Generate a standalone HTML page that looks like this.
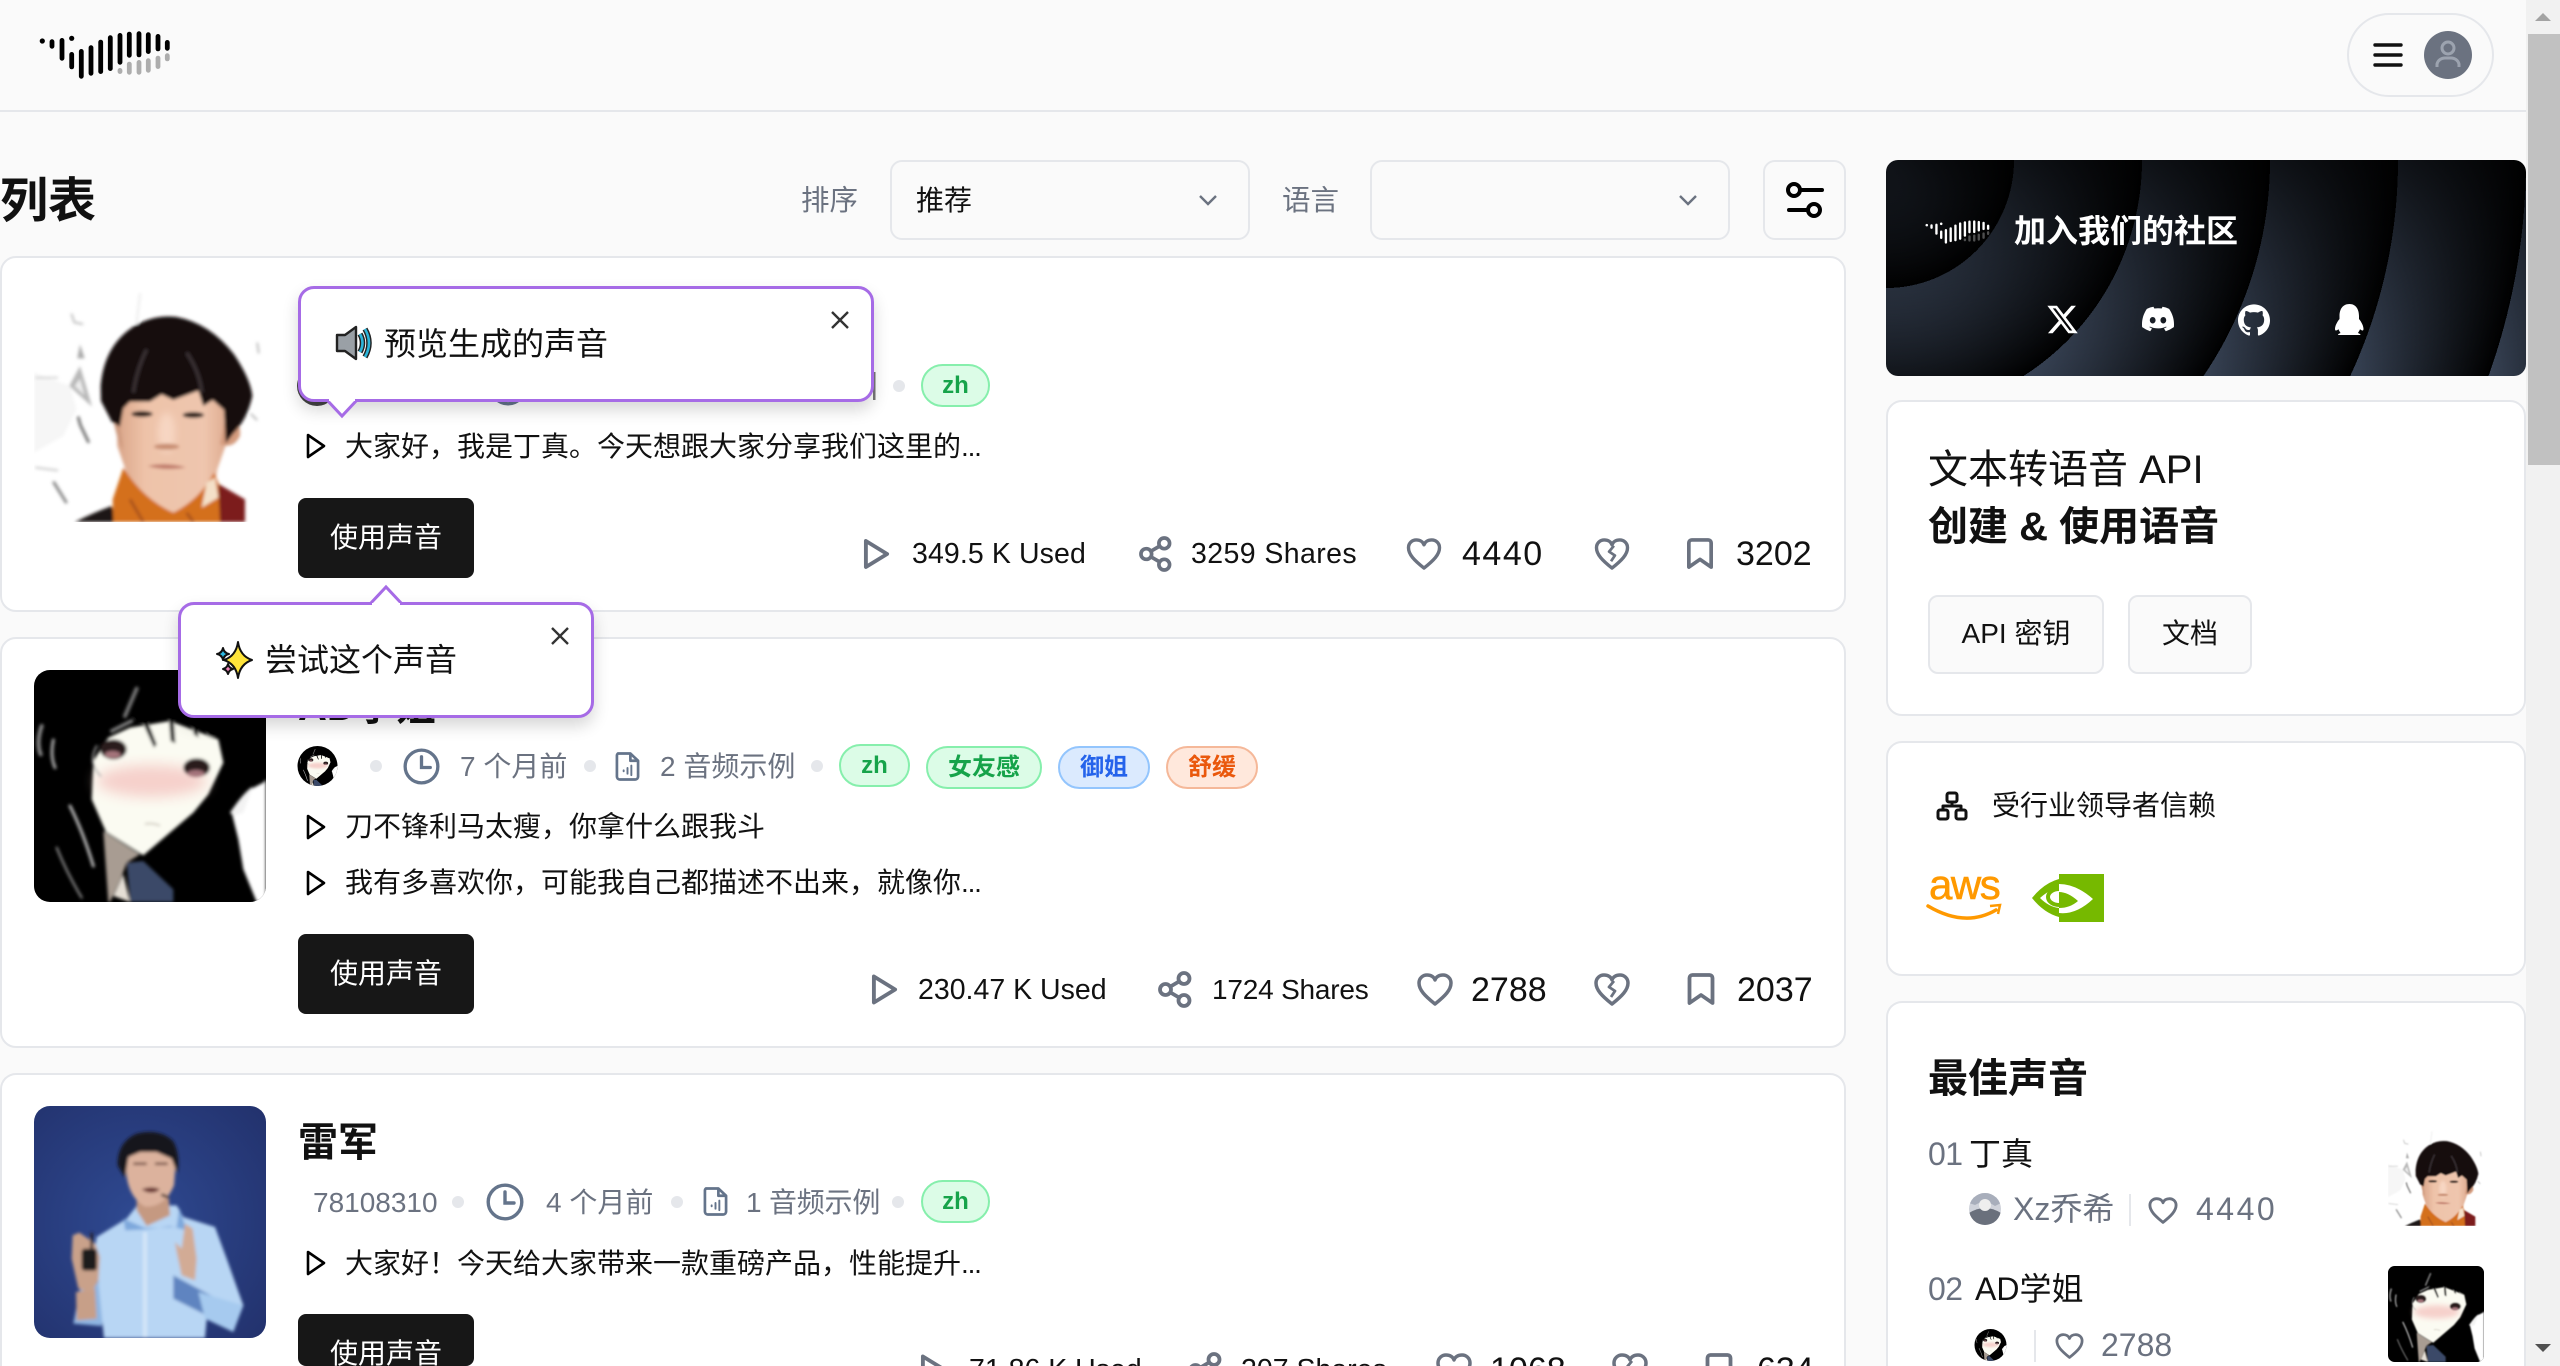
<!DOCTYPE html>
<html lang="zh"><head><meta charset="utf-8"><title>列表</title>
<style>
html,body{margin:0;padding:0;width:2560px;height:1366px;overflow:hidden;background:#fafafa}
body{font-family:"Liberation Sans","Noto Sans CJK SC",sans-serif;color:#111}
#wrap{position:absolute;left:0;top:0;width:2560px;height:1366px;overflow:hidden}
.t{position:absolute;white-space:nowrap;line-height:60px;font-size:28px;margin-top:1px}
.e{letter-spacing:-1.200px}
.c{height:26px;overflow:hidden}
.g{color:#6b7280}.b{font-weight:700}
.box{position:absolute;box-sizing:border-box;border:2px solid #e5e7eb;border-radius:16px;background:#fff}
.open{border-bottom:0;border-bottom-left-radius:0;border-bottom-right-radius:0}
.sel{background:#fafafa;border-radius:12px;height:80px;top:160px}
.btn{position:absolute;left:298px;width:176px;height:80px;background:#171717;color:#fff;border-radius:8px;text-align:center;line-height:80px;font-size:28px;overflow:hidden}
.btn2{position:absolute;box-sizing:border-box;border:2px solid #e5e7eb;border-radius:10px;background:#fafafa;text-align:center;font-size:28px;line-height:74px;top:595px;height:79px}
.dot{position:absolute;width:12px;height:12px;border-radius:50%;background:#e5e7eb}
.tag{position:absolute;box-sizing:border-box;height:43px;border-radius:22px;border:2px solid;text-align:center;font-size:24px;font-weight:700;line-height:40px}
.gr{background:#dcfce7;border-color:#86efac;color:#16a34a}
.bl{background:#dbeafe;border-color:#93c5fd;color:#2563eb}
.or{background:#ffe8dc;border-color:#f5b899;color:#ea580c}
.tip{position:absolute;box-sizing:border-box;border:3px solid #a66be6;border-radius:16px;background:#fff;box-shadow:0 8px 16px rgba(0,0,0,.16)}
#layer{position:absolute;left:0;top:0}
#banner{position:absolute;left:1886px;top:160px;width:640px;height:216px;border-radius:12px;overflow:hidden;background:linear-gradient(rgba(0,0,0,.72),rgba(0,0,0,0) 100%),repeating-radial-gradient(circle at 0 0,#374254 0,#000 128px)}
</style></head><body><div id="wrap">

<div style="position:absolute;left:0;top:110px;width:2526px;height:2px;background:#e5e7eb"></div>
<div class="box" style="left:2347px;top:13px;width:147px;height:84px;border-radius:42px;background:#fafafa"></div>

<div class="t b" style="left:0;top:171px;font-size:48px">列表</div>
<div class="t g" style="left:801px;top:170px;font-size:28.500px">排序</div>
<div class="box sel" style="left:890px;width:360px"></div>
<div class="t" style="left:916px;top:170px">推荐</div>
<div class="t g" style="left:1282px;top:170px;font-size:28.500px">语言</div>
<div class="box sel" style="left:1370px;width:360px"></div>
<div class="box sel" style="left:1763px;width:83px"></div>

<div class="box" style="left:0;top:256px;width:1846px;height:356px"></div>
<div class="box" style="left:0;top:637px;width:1846px;height:411px"></div>
<div class="box open" style="left:0;top:1073px;width:1846px;height:293px"></div>

<div id="banner"></div>
<div class="box" style="left:1886px;top:400px;width:640px;height:316px"></div>
<div class="box" style="left:1886px;top:741px;width:640px;height:235px"></div>
<div class="box open" style="left:1886px;top:1001px;width:640px;height:365px"></div>

<svg id="layer" width="2560" height="1366" viewBox="0 0 2560 1366" xmlns="http://www.w3.org/2000/svg">
<defs>
<filter id="bl" x="-5%" y="-5%" width="110%" height="110%"><feGaussianBlur stdDeviation="5"/></filter>
<filter id="bl2" x="-30%" y="-30%" width="160%" height="160%"><feGaussianBlur stdDeviation="20"/></filter>
<filter id="bl3" x="-30%" y="-30%" width="160%" height="160%"><feGaussianBlur stdDeviation="10"/></filter>
<clipPath id="rc"><rect x="12" y="12" width="696" height="696" rx="48"/></clipPath>
<clipPath id="ca"><circle cx="317.500" cy="766" r="20"/></clipPath>
<clipPath id="cb"><circle cx="1990.500" cy="1345" r="16"/></clipPath>
<clipPath id="cc"><circle cx="1985" cy="1209" r="16"/></clipPath>
<radialGradient id="leib" cx=".45" cy=".5" r=".75"><stop offset="0" stop-color="#2f4a92"/><stop offset="1" stop-color="#22316c"/></radialGradient>
<linearGradient id="skin1" x1="0" y1="0" x2="1" y2="0"><stop offset="0" stop-color="#d9a488"/><stop offset=".25" stop-color="#eec3a9"/><stop offset=".75" stop-color="#efc6ae"/><stop offset="1" stop-color="#d9a488"/></linearGradient>

<symbol id="logo" viewBox="0 0 220 110">
<g fill="currentColor">
<circle cx="42.300" cy="41" r="2.600"/><circle cx="71.700" cy="38.300" r="2.600"/>
<rect x="49.600" y="39.300" width="4.800" height="9.400" rx="2.400"/>
<rect x="59.600" y="38" width="4.800" height="22.700" rx="2.400"/>
<rect x="69.300" y="52" width="4.800" height="17.300" rx="2.400"/>
<rect x="78.900" y="49" width="4.800" height="29.700" rx="2.400"/>
<rect x="88.600" y="45.300" width="4.800" height="30.400" rx="2.400"/>
<rect x="98.300" y="39.700" width="4.800" height="34.300" rx="2.400"/>
<rect x="107.900" y="35.300" width="4.800" height="35.700" rx="2.400"/>
<rect x="117.600" y="33" width="4.800" height="31.700" rx="2.400"/>
<rect x="126.900" y="31.700" width="4.800" height="26" rx="2.400"/>
<rect x="136.600" y="31.300" width="4.800" height="26" rx="2.400"/>
<rect x="145.900" y="32.300" width="4.800" height="21.700" rx="2.400"/>
<rect x="155.600" y="34" width="4.800" height="17.300" rx="2.400"/>
<rect x="164.900" y="40" width="4.800" height="10.700" rx="2.400"/>
</g>
<g fill="currentColor" opacity=".3">
<rect x="117.600" y="68" width="4.800" height="6" rx="2.400"/>
<rect x="126.900" y="61.700" width="4.800" height="13" rx="2.400"/>
<rect x="136.600" y="60" width="4.800" height="14.700" rx="2.400"/>
<rect x="145.900" y="58.300" width="4.800" height="14.400" rx="2.400"/>
<rect x="155.600" y="55.700" width="4.800" height="13.300" rx="2.400"/>
<rect x="164.900" y="53.300" width="4.800" height="8" rx="2.400"/>
</g>
</symbol>

<symbol id="p1" viewBox="12 12 696 696"><g clip-path="url(#rc)">
<rect x="12" y="12" width="696" height="696" fill="#fff"/>
<g filter="url(#bl)">
<path d="M12 260L120 300 140 370 100 450 12 500Z" fill="#f6f6f6"/>
<path d="M150 240L118 300 186 362 168 300Z" fill="#b8b8b8"/>
<path d="M150 278L134 300 164 328Z" fill="#eee"/>
<path d="M150 175l14 42-22 0z" fill="#aaa"/>
<g fill="none" stroke-linecap="round">
<path d="M125 85l8 24 24 5" stroke="#c0c0c0" stroke-width="6"/>
<path d="M18 275h64" stroke="#ccc" stroke-width="5"/>
<path d="M145 395l6 22 24 50" stroke="#777" stroke-width="9"/>
<path d="M72 590l36 58" stroke="#888" stroke-width="9"/>
<path d="M18 545l64 8" stroke="#ccc" stroke-width="6"/>
<path d="M682 172l4 28M664 385l16 16" stroke="#bbb" stroke-width="6"/>
<path d="M330 25l-10 85" stroke="#f0f0f0" stroke-width="8"/>
</g>
<path d="M135 708Q190 680 245 660L262 708Z" fill="#1a1412"/>
<path d="M550 585L645 640V708H540Z" fill="#7c1c1c"/>
<path d="M258 300H610L590 470 562 550 550 640 450 690H380L300 590 262 480Z" fill="url(#skin1)"/>
<path d="M585 400Q635 395 630 450 610 490 570 475Z" fill="#d49b7e"/>
<path d="M250 400Q262 470 280 490L268 400Z" fill="#cf9b80"/>
<ellipse cx="410" cy="440" rx="26" ry="60" fill="#f7d6c2" filter="url(#bl3)"/>
<ellipse cx="410" cy="482" rx="38" ry="9" fill="#c98f73"/>
<path d="M280 545L248 640 250 708H570L565 590 552 560Q510 640 430 680 340 640 280 545Z" fill="#d46f1e"/>
<path d="M530 590l25-15 10 60-50 30z" fill="#f4e0c8"/>
<path d="M300 640l40 68M470 680l20 28" stroke="#a5501a" stroke-width="8" fill="none"/>
<path d="M212 300Q222 180 310 122 370 85 440 93 540 112 612 205 662 280 667 330 652 400 610 442L587 472 582 372 548 342 520 360 505 314 430 342 395 325 360 347 300 347 280 367 270 422 245 407 213 345Z" fill="#120d0f"/>
<path d="M470 200Q510 260 515 320M350 190Q320 250 310 320" stroke="#3a3034" stroke-width="10" fill="none"/>
<ellipse cx="336" cy="384" rx="32" ry="9" fill="#2a1a18"/><ellipse cx="490" cy="387" rx="32" ry="9" fill="#2a1a18"/>
<path d="M352 540Q410 528 468 544 410 556 352 540Z" fill="#c07a6a"/>
</g></g></symbol>

<symbol id="p2" viewBox="12 12 696 696"><g clip-path="url(#rc)">
<rect x="12" y="12" width="696" height="696" fill="#000"/>
<g filter="url(#bl)">
<path d="M700 350L708 340V708H680L640 610 625 520 605 440 660 370Z" fill="#fff"/>
<path d="M600 440Q640 380 668 362L640 440 610 450Z" fill="#f3f3f3"/>
<path d="M190 285L235 215 300 185 420 165 565 220 580 290 535 385 490 440 340 568 228 498 185 400Z" fill="#fbfbf2"/>
<ellipse cx="365" cy="345" rx="165" ry="48" fill="#f6d0cb" filter="url(#bl2)"/>
<ellipse cx="250" cy="250" rx="40" ry="30" fill="#2b1c1e"/><ellipse cx="248" cy="266" rx="24" ry="11" fill="#a5757c"/>
<ellipse cx="500" cy="305" rx="40" ry="28" fill="#2b1c1e"/><ellipse cx="498" cy="323" rx="26" ry="11" fill="#a5757c"/>
<path d="M305 150L345 145 380 235 372 245 338 170ZM412 100L428 110 436 232 422 225ZM482 160L498 150 506 215 492 205ZM532 165L553 160 553 218 532 210Z" fill="#000"/>
<path d="M345 474q22-4 45 5" stroke="#c8c2b8" stroke-width="5" fill="none"/>
<path d="M220 495L330 565 290 590 272 640 240 708 235 708Z" fill="#a89c92"/>
<path d="M290 590L340 585 430 670V708H300Z" fill="#3a4968"/>
<path d="M250 690L280 625 300 708Z" fill="#e5dfd5"/>
<g fill="none" stroke-linecap="round">
<path d="M35 180Q18 230 32 265" stroke="#888" stroke-width="12"/>
<path d="M70 222Q60 270 75 305" stroke="#aaa" stroke-width="9"/>
<path d="M285 150L320 68" stroke="#777" stroke-width="12"/>
<path d="M245 195L305 165" stroke="#888" stroke-width="10"/>
<path d="M120 420Q160 500 190 600" stroke="#bbb" stroke-width="9"/>
<path d="M80 545Q110 620 155 695" stroke="#999" stroke-width="6"/>
<path d="M200 240Q172 290 212 330" stroke="#aaa" stroke-width="5"/>
</g>
</g></g></symbol>

<symbol id="p3" viewBox="12 12 696 696"><g clip-path="url(#rc)">
<rect x="12" y="12" width="696" height="696" fill="url(#leib)"/>
<g filter="url(#bl)">
<path d="M130 665L150 560 205 540 225 620 215 672Z" fill="#8fb6e2"/>
<path d="M138 570L195 560 200 650 140 655Z" fill="#c79f88"/>
<path d="M200 405L290 350 320 312 440 310 460 345 555 375 590 470 640 610 610 685 530 650 525 708H222L205 540 190 470Z" fill="#b8d6f4"/>
<path d="M280 350L345 378 440 375 448 318 470 385 420 372 350 382 286 385Z" fill="#7ea8dc"/>
<path d="M320 270L320 325 350 372 420 340 415 270Z" fill="#c59981"/>
<path d="M288 180Q285 280 345 314 405 316 432 250L438 170 400 130 310 140Z" fill="#dcb29d"/>
<path d="M263 190Q262 120 320 95 390 78 430 118 452 160 442 215L425 170 380 150 330 150 295 165 285 228Z" fill="#17151b"/>
<path d="M310 185h40M375 185h38" stroke="#6a4439" stroke-width="7"/>
<path d="M335 262q30-12 55 0 -25 20-55 0Z" fill="#6b3430"/>
<path d="M394 278l22 8" stroke="#3a2a26" stroke-width="8"/>
<path d="M128 400L148 392 196 425 210 465 205 535 185 572 145 560 125 470Z" fill="#c9a18a"/>
<rect x="155" y="440" width="46" height="66" rx="10" fill="#1c1a1e"/>
<rect x="181" y="392" width="8" height="52" fill="#26242a"/>
<path d="M465 365L488 380 500 470 495 535 455 520 440 450 435 420 455 440Z" fill="#d2ab95"/>
<path d="M430 520L560 590 540 645 430 590Z" fill="#5f84c0"/>
<path d="M505 570L640 610 610 690 525 650Z" fill="#a6caef"/>
<path d="M345 390V708" stroke="#d4e6f8" stroke-width="12" fill="none"/>
</g></g></symbol>

<symbol id="sPlay" viewBox="0 0 28 33"><path d="M3 3L25 16.500 3 30Z" fill="none" stroke="#6b7280" stroke-width="4" stroke-linejoin="round"/></symbol>
<symbol id="kPlay" viewBox="0 0 20 26"><path d="M2 2L18 13 2 24Z" fill="none" stroke="#000" stroke-width="2.600" stroke-linejoin="round"/></symbol>
<symbol id="sShare" viewBox="0 0 34 37" fill="none" stroke="#6b7280" stroke-width="3.800"><circle cx="26" cy="7.500" r="5.500"/><circle cx="7.500" cy="18.500" r="5.500"/><circle cx="26" cy="29.500" r="5.500"/><path d="M12.500 15.500L21 10.500M12.500 21.500L21 26.500"/></symbol>
<symbol id="sHeart" viewBox="0 0 36 33" fill="none" stroke="#6b7280" stroke-width="3.500" stroke-linejoin="round"><path d="M18 31C8 23 2 17 2 10 2 5 6 2 10 2 14 2 17 4 18 7 19 4 22 2 26 2 30 2 34 5 34 10 34 17 28 23 18 31Z"/></symbol>
<symbol id="sBroke" viewBox="0 0 36 33" fill="none" stroke="#6b7280" stroke-width="3.500" stroke-linejoin="round"><path d="M18 31C8 23 2 17 2 10 2 5 6 2 10 2 14 2 17 4 18 7 19 4 22 2 26 2 30 2 34 5 34 10 34 17 28 23 18 31Z"/><path d="M20 8L15 14 21 18 17 24" stroke-width="2.800"/></symbol>
<symbol id="sBook" viewBox="0 0 28 33" fill="none" stroke="#6b7280" stroke-width="3.800" stroke-linejoin="round"><path d="M2.500 5a3 3 0 0 1 3-3h17a3 3 0 0 1 3 3V30L14 22 2.500 30Z"/></symbol>
<symbol id="sClock" viewBox="0 0 38 38" fill="none" stroke="#64748b" stroke-width="3.400"><circle cx="19" cy="19" r="16.800"/><path d="M19 9V20H28" stroke-linecap="round"/></symbol>
<symbol id="sFile" viewBox="0 0 26 30" fill="none" stroke="#64748b" stroke-width="2.800" stroke-linejoin="round"><path d="M3 1.500H16L24 9V25.500a3 3 0 0 1-3 3H5a3 3 0 0 1-3-3V4a3 3 0 0 1 1-2.500Z"/><path d="M16 1.500V9H24"/><path d="M9 19v1M13 16.500v6M17 14v10" stroke-width="2" stroke-linecap="round"/></symbol>
<symbol id="cv" viewBox="0 0 20 12"><path d="M2 2L10 10 18 2" fill="none" stroke="#6b7280" stroke-width="2.400"/></symbol>
</defs>

<!-- header -->
<use href="#logo" x="0" y="0" width="220" height="110" color="#000"/>
<g stroke="#111" stroke-width="3.400" stroke-linecap="round"><path d="M2375 45H2401M2375 55H2401M2375 65H2401"/></g>
<circle cx="2448" cy="55" r="24" fill="#6b7280"/>
<g fill="none" stroke="#9ca3af" stroke-width="3"><circle cx="2448" cy="48" r="6"/><path d="M2437 67v-3a8 8 0 0 1 8-6h6a8 8 0 0 1 8 6v3"/></g>

<!-- filter controls -->
<use href="#cv" x="1198" y="194" width="20" height="12"/>
<use href="#cv" x="1678" y="194" width="20" height="12"/>
<g fill="none" stroke="#000" stroke-width="4" stroke-linecap="round"><circle cx="1794" cy="190" r="6"/><path d="M1801 190H1822"/><circle cx="1814" cy="210" r="6"/><path d="M1789 210H1807"/></g>

<!-- photos -->
<use href="#p1" x="34" y="290" width="232" height="232"/>
<use href="#p2" x="34" y="670" width="232" height="232"/>
<use href="#p3" x="34" y="1106" width="232" height="232"/>

<!-- card 1 -->
<circle cx="317" cy="386" r="20" fill="#444"/>
<use href="#sClock" x="489" y="368" width="38" height="38"/>
<rect x="873" y="372" width="2.500" height="28" fill="#777"/>
<use href="#kPlay" x="306" y="433" width="20" height="26"/>
<use href="#sPlay" x="863" y="538" width="27" height="32"/>
<use href="#sShare" x="1139" y="536" width="33" height="36"/>
<use href="#sHeart" x="1406" y="538" width="36" height="32"/>
<use href="#sBroke" x="1594" y="538" width="36" height="32"/>
<use href="#sBook" x="1686" y="538" width="28" height="32"/>

<!-- card 2 -->
<g clip-path="url(#ca)"><use href="#p2" x="297" y="746" width="41" height="41"/></g>
<use href="#sClock" x="403" y="748" width="37" height="37"/>
<use href="#sFile" x="615" y="752" width="25" height="29"/>
<use href="#kPlay" x="306" y="814" width="20" height="26"/>
<use href="#kPlay" x="306" y="870" width="20" height="26"/>
<use href="#sPlay" x="871" y="973" width="27" height="33"/>
<use href="#sShare" x="1158" y="971" width="34" height="37"/>
<use href="#sHeart" x="1417" y="973" width="36" height="33"/>
<use href="#sBroke" x="1594" y="973" width="36" height="33"/>
<use href="#sBook" x="1687" y="973" width="28" height="33"/>

<!-- card 3 -->
<use href="#sClock" x="486" y="1183" width="38" height="38"/>
<use href="#sFile" x="703" y="1187" width="25" height="29"/>
<use href="#kPlay" x="306" y="1250" width="20" height="26"/>
<use href="#sPlay" x="920" y="1353" width="27" height="33"/>
<use href="#sShare" x="1188" y="1352" width="34" height="37"/>
<use href="#sHeart" x="1436" y="1353" width="36" height="33"/>
<use href="#sBroke" x="1612" y="1353" width="36" height="33"/>
<use href="#sBook" x="1705" y="1353" width="28" height="33"/>

<!-- banner content -->
<use href="#logo" x="1906" y="205" width="108" height="54" color="#fff"/>
<g fill="#fff">
<svg x="2047" y="304" width="31" height="31" viewBox="1 2 22 20"><path d="M18.244 2.250h3.308l-7.227 8.260 8.502 11.240H16.170l-5.214-6.817L4.990 21.750H1.680l7.730-8.835L1.254 2.250H8.080l4.713 6.231zm-1.161 17.520h1.833L7.084 4.126H5.117z"/></svg>
<svg x="2142" y="304" width="32" height="30" viewBox="0 2.500 24 19"><path d="M20.317 4.370a19.791 19.791 0 0 0-4.885-1.515.074.074 0 0 0-.079.037c-.21.375-.444.864-.608 1.250a18.270 18.270 0 0 0-5.487 0 12.640 12.640 0 0 0-.617-1.250.077.077 0 0 0-.079-.037A19.736 19.736 0 0 0 3.677 4.370a.07.07 0 0 0-.032.027C.533 9.046-.32 13.580.099 18.057a.082.082 0 0 0 .031.057 19.900 19.900 0 0 0 5.993 3.030.078.078 0 0 0 .084-.028c.462-.63.874-1.295 1.226-1.994a.076.076 0 0 0-.041-.106 13.107 13.107 0 0 1-1.872-.892.077.077 0 0 1-.008-.128 10.200 10.200 0 0 0 .372-.292.074.074 0 0 1 .077-.01c3.928 1.793 8.180 1.793 12.062 0a.074.074 0 0 1 .078.01c.12.098.246.198.373.292a.077.077 0 0 1-.006.127 12.299 12.299 0 0 1-1.873.892.077.077 0 0 0-.041.107c.36.698.772 1.362 1.225 1.993a.076.076 0 0 0 .084.028 19.839 19.839 0 0 0 6.002-3.030.077.077 0 0 0 .032-.054c.5-5.177-.838-9.674-3.549-13.660a.061.061 0 0 0-.031-.03zM8.020 15.330c-1.183 0-2.157-1.085-2.157-2.419 0-1.333.956-2.419 2.157-2.419 1.210 0 2.176 1.096 2.157 2.420 0 1.333-.956 2.418-2.157 2.418zm7.975 0c-1.183 0-2.157-1.085-2.157-2.419 0-1.333.955-2.419 2.157-2.419 1.210 0 2.176 1.096 2.157 2.420 0 1.333-.946 2.418-2.157 2.418z"/></svg>
<svg x="2238" y="304" width="32" height="32" viewBox="0 0 24 24"><path d="M12 .297c-6.630 0-12 5.373-12 12 0 5.303 3.438 9.800 8.205 11.385.6.113.82-.258.82-.577 0-.285-.01-1.040-.015-2.040-3.338.724-4.042-1.610-4.042-1.610C4.422 18.070 3.633 17.700 3.633 17.700c-1.087-.744.084-.729.084-.729 1.205.084 1.838 1.236 1.838 1.236 1.070 1.835 2.809 1.305 3.495.998.108-.776.417-1.305.76-1.605-2.665-.3-5.466-1.332-5.466-5.930 0-1.310.465-2.380 1.235-3.220-.135-.303-.54-1.523.105-3.176 0 0 1.005-.322 3.300 1.230.96-.267 1.980-.399 3-.405 1.020.006 2.040.138 3 .405 2.280-1.552 3.285-1.230 3.285-1.230.645 1.653.24 2.873.12 3.176.765.84 1.230 1.910 1.230 3.220 0 4.610-2.805 5.625-5.475 5.920.42.36.81 1.096.81 2.220 0 1.606-.015 2.896-.015 3.286 0 .315.21.69.825.57C20.565 22.092 24 17.592 24 12.297c0-6.627-5.373-12-12-12"/></svg>
<path d="M2349.500 304c-7 0-10 5.500-10 12v3c-2.500 3-4.500 7-4.500 10 0 2 1.500 2 3.500 .3 .6 1.600 1.500 2.700 2 3.700-1.500 .6-2.500 1.200-2.500 2h22.500c0-.8-1-1.400-2.500-2 .5-1 1.400-2.100 2-3.700 2 1.700 3.500 1.700 3.500-.3 0-3-2-7-4.500-10v-3c0-6.500-3-12-9.500-12z"/>
</g>

<!-- trusted -->
<g fill="none" stroke="#111" stroke-width="3" stroke-linejoin="round"><rect x="1947" y="793" width="10" height="9" rx="2"/><rect x="1938" y="810" width="10" height="9" rx="2"/><rect x="1956" y="810" width="10" height="9" rx="2"/><path d="M1952 802V806M1943 810V806H1961V810"/></g>
<text x="1929" y="899" font-family="Liberation Sans,sans-serif" font-size="42" font-weight="400" stroke="#f90" stroke-width=".6" letter-spacing="-1.500" fill="#f90">aws</text>
<path d="M1928 906Q1965 928 1996 910" fill="none" stroke="#f90" stroke-width="3.500" stroke-linecap="round"/>
<path d="M1990 906L2000 905 1998 914" fill="none" stroke="#f90" stroke-width="2.500"/>
<rect x="2059" y="874" width="45" height="48" fill="#76b900"/>
<path d="M2032 898Q2044 883 2059 879V917Q2044 913 2032 898Z" fill="#76b900"/>
<path d="M2040 898Q2050 889 2059 888V908Q2049 907 2040 898Z" fill="#fff"/>
<ellipse cx="2059" cy="897" rx="11" ry="8" fill="none" stroke="#76b900" stroke-width="4"/>
<path d="M2059 884Q2076 884 2093 899 2076 915 2059 913V908Q2070 908 2078 901 2068 892 2059 892Z" fill="#fff"/>

<!-- best voices -->
<use href="#p1" x="2388" y="1130" width="96" height="96"/>
<use href="#p2" x="2388" y="1266" width="96" height="96"/>
<g clip-path="url(#cc)"><rect x="1969" y="1193" width="32" height="32" fill="#cfd2da"/><path d="M1969 1193h32v10l-6 3-10-6-10 5-6-2z" fill="#a8aebb"/><path d="M1969 1213q16-10 32 0v12h-32z" fill="#6a707c"/><circle cx="1985" cy="1205" r="6" fill="#eee"/></g>
<rect x="2129" y="1194" width="2" height="32" fill="#e5e7eb"/>
<use href="#sHeart" x="2148" y="1197" width="30" height="27"/>
<g clip-path="url(#cb)"><use href="#p2" x="1974" y="1329" width="33" height="33"/></g>
<rect x="2034" y="1330" width="2" height="32" fill="#e5e7eb"/>
<use href="#sHeart" x="2055" y="1333" width="29" height="26"/>

<!-- scrollbar -->
<rect x="2526" y="0" width="34" height="1366" fill="#f1f1f1"/>
<rect x="2528" y="34" width="32" height="431" fill="#c1c1c1"/>
<path d="M2543 13L2551 21H2535Z" fill="#a3a3a3"/>
<path d="M2535 1344H2551L2543 1352Z" fill="#505050"/>
</svg>

<!-- card 1 text -->
<div class="t b" style="left:298px;top:295px;font-size:40px">丁真</div>
<div class="tag gr" style="left:921px;top:364px;width:69px">zh</div>
<div class="dot" style="left:893px;top:380px"></div>
<div class="t" style="left:345px;top:416px">大家好，我是丁真。今天想跟大家分享我们这里的<span class="e">...</span></div>
<div class="btn" style="top:498px">使用声音</div>
<div class="t" style="left:912px;top:523px;font-size:28.500px;letter-spacing:.1px">349.5 K Used</div>
<div class="t" style="left:1191px;top:523px;font-size:28.500px;letter-spacing:.4px">3259 Shares</div>
<div class="t" style="left:1462px;top:523px;font-size:34px;letter-spacing:1.500px">4440</div>
<div class="t" style="left:1736px;top:523px;font-size:34px">3202</div>

<!-- card 2 text -->
<div class="t b" style="left:298px;top:676px;font-size:40px">AD学姐</div>
<div class="dot" style="left:370px;top:760px"></div>
<div class="t g" style="left:460px;top:736px">7 个月前</div>
<div class="dot" style="left:584px;top:760px"></div>
<div class="t g" style="left:660px;top:736px">2 音频示例</div>
<div class="dot" style="left:811px;top:760px"></div>
<div class="tag gr" style="left:839px;top:744px;width:71px">zh</div>
<div class="tag gr" style="left:926px;top:746px;width:116px">女友感</div>
<div class="tag bl" style="left:1058px;top:746px;width:92px">御姐</div>
<div class="tag or" style="left:1166px;top:746px;width:92px">舒缓</div>
<div class="t" style="left:345px;top:796px">刀不锋利马太瘦，你拿什么跟我斗</div>
<div class="t" style="left:345px;top:852px">我有多喜欢你，可能我自己都描述不出来，就像你<span class="e">...</span></div>
<div class="btn" style="top:934px">使用声音</div>
<div class="t" style="left:918px;top:959px;font-size:28.500px">230.47 K Used</div>
<div class="t" style="left:1212px;top:959px;font-size:28px;letter-spacing:-.2px">1724 Shares</div>
<div class="t" style="left:1471px;top:959px;font-size:34px">2788</div>
<div class="t" style="left:1737px;top:959px;font-size:34px">2037</div>

<!-- card 3 text -->
<div class="t b" style="left:298px;top:1112px;font-size:40px">雷军</div>
<div class="t g" style="left:313px;top:1172px">78108310</div>
<div class="dot" style="left:452px;top:1196px"></div>
<div class="t g" style="left:546px;top:1172px">4 个月前</div>
<div class="dot" style="left:671px;top:1196px"></div>
<div class="t g" style="left:746px;top:1172px;letter-spacing:-.2px">1 音频示例</div>
<div class="dot" style="left:892px;top:1196px"></div>
<div class="tag gr" style="left:921px;top:1180px;width:69px">zh</div>
<div class="t" style="left:345px;top:1233px">大家好！今天给大家带来一款重磅产品，性能提升<span class="e">...</span></div>
<div class="btn" style="top:1314px;height:52px">使用声音</div>
<div class="t c" style="left:969px;top:1339px;font-size:28.500px">71.86 K Used</div>
<div class="t c" style="left:1241px;top:1339px;font-size:28.500px">207 Shares</div>
<div class="t c" style="left:1490px;top:1339px;font-size:34px">1068</div>
<div class="t c" style="left:1757px;top:1339px;font-size:34px">634</div>

<!-- sidebar text -->
<div class="t b" style="left:2014px;top:200px;font-size:32px;color:#fff">加入我们的社区</div>
<div class="t" style="left:1928px;top:439px;font-size:40px">文本转语音 API</div>
<div class="t b" style="left:1928px;top:496px;font-size:40px">创建 &amp; 使用语音</div>
<div class="btn2" style="left:1928px;width:176px">API 密钥</div>
<div class="btn2" style="left:2128px;width:124px">文档</div>
<div class="t" style="left:1992px;top:775px">受行业领导者信赖</div>
<div class="t b" style="left:1928px;top:1048px;font-size:40px">最佳声音</div>
<div class="t g" style="left:1928px;top:1123px;font-size:32px;letter-spacing:-.5px">01</div>
<div class="t" style="left:1969px;top:1123px;font-size:32px">丁真</div>
<div class="t g" style="left:2013px;top:1178px;font-size:32px">Xz乔希</div>
<div class="t g" style="left:2196px;top:1178px;font-size:32px;letter-spacing:2.500px">4440</div>
<div class="t g" style="left:1928px;top:1258px;font-size:32px;letter-spacing:-.5px">02</div>
<div class="t" style="left:1975px;top:1258px;font-size:32px">AD学姐</div>
<div class="t g c" style="left:2101px;top:1314px;font-size:32px;height:51px">2788</div>

<!-- tooltips -->
<div class="tip" style="left:298px;top:286px;width:576px;height:116px"></div>
<svg style="position:absolute;left:320px;top:396px" width="46" height="24" viewBox="0 0 46 24"><path d="M7 4L22 20 37 4" fill="#fff" stroke="#a66be6" stroke-width="3"/><rect x="9" y="0" width="26" height="5" fill="#fff"/></svg>
<svg style="position:absolute;left:332px;top:324px" width="44" height="38" viewBox="0 0 44 38">
<path d="M5 11H13L24 3V35L13 27H5Z" fill="#9aa0a6" stroke="#222" stroke-width="2.400" stroke-linejoin="round"/>
<path d="M28 10Q33 19 28 28" fill="none" stroke="#222" stroke-width="5.500"/><path d="M28 10Q33 19 28 28" fill="none" stroke="#2cb5d9" stroke-width="2.600"/>
<path d="M33 5Q41 19 33 33" fill="none" stroke="#222" stroke-width="5.500"/><path d="M33 5Q41 19 33 33" fill="none" stroke="#2cb5d9" stroke-width="2.600"/>
</svg>
<div class="t" style="left:384px;top:313px;font-size:32px">预览生成的声音</div>
<svg style="position:absolute;left:829px;top:309px" width="22" height="22"><path d="M3 3L19 19M19 3L3 19" stroke="#333" stroke-width="2.400"/></svg>

<div class="tip" style="left:178px;top:602px;width:416px;height:116px"></div>
<svg style="position:absolute;left:364px;top:584px" width="46" height="24" viewBox="0 0 46 24"><path d="M6 20L22 3 38 20" fill="#fff" stroke="#a66be6" stroke-width="3"/><rect x="8" y="19" width="28" height="5" fill="#fff"/></svg>
<svg style="position:absolute;left:214px;top:640px" width="40" height="40" viewBox="0 0 40 40" stroke="#111" stroke-width="2" stroke-linejoin="round">
<path d="M24 2Q26 16 38 20 26 24 24 38 22 24 10 20 22 16 24 2Z" fill="#ffe43a"/>
<path d="M9 8Q10 13 15 14 10 15 9 20 8 15 3 14 8 13 9 8Z" fill="#2cb8e0"/>
<path d="M14 24Q15 28 19 29 15 30 14 34 13 30 9 29 13 28 14 24Z" fill="#f080b8"/>
</svg>
<div class="t" style="left:265px;top:629px;font-size:32px">尝试这个声音</div>
<svg style="position:absolute;left:549px;top:625px" width="22" height="22"><path d="M3 3L19 19M19 3L3 19" stroke="#333" stroke-width="2.400"/></svg>

</div></body></html>
